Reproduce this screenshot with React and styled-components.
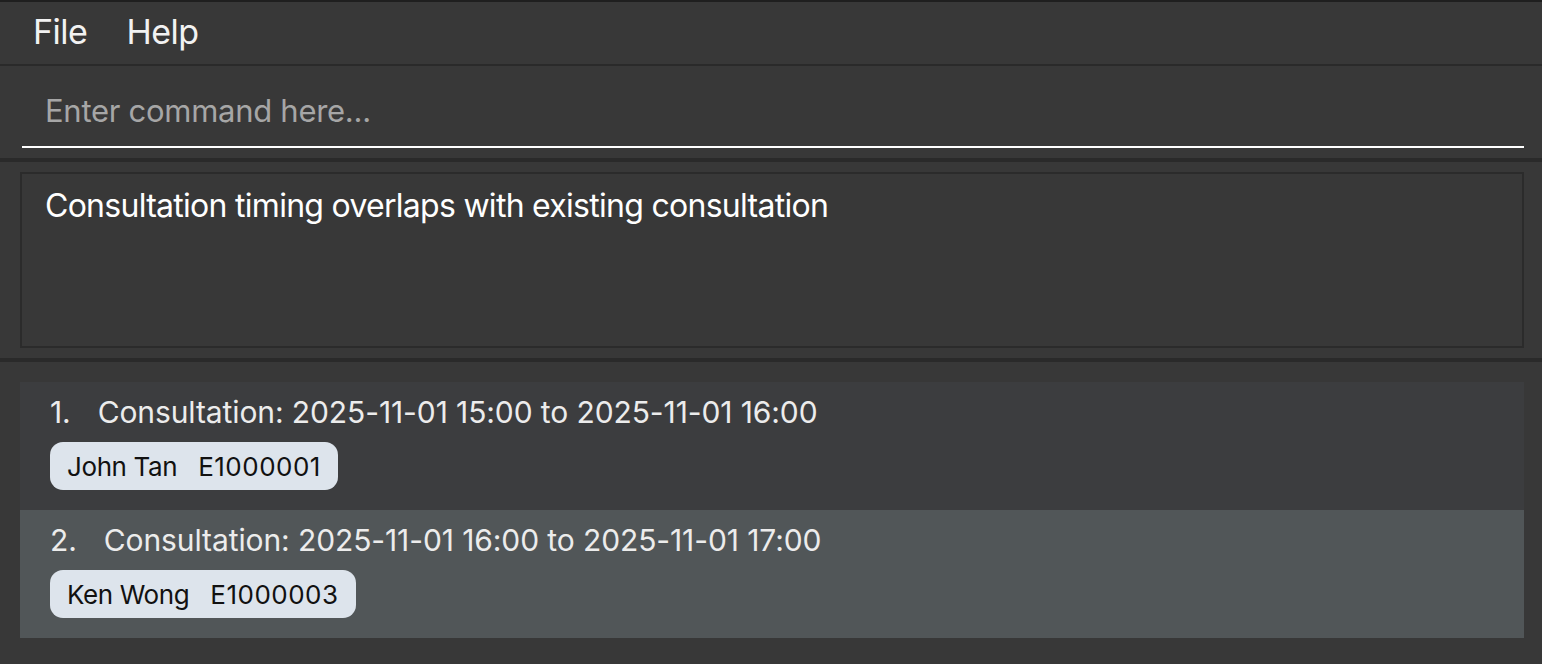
import React from "react";
import styled, { createGlobalStyle } from "styled-components";

const Global = createGlobalStyle`
  html, body { margin: 0; padding: 0; background: #383838; }
  body { font-family: Inter, "Noto Sans", "Liberation Sans", sans-serif; }
  * { box-sizing: border-box; }
`;

const Window = styled.div`
  width: 1542px;
  height: 664px;
  background: #383838;
  border-top: 2px solid #1f1f1f;
  display: flex;
  flex-direction: column;
  overflow: hidden;
`;

const MenuBar = styled.div`
  height: 64px;
  flex-shrink: 0;
  display: flex;
  align-items: center;
  gap: 39px;
  padding: 0 0 3px 33px;
  border-bottom: 2px solid #2a2a2a;
`;

const MenuItem = styled.span`
  color: #f2f2f2;
  font-size: 34px;
  letter-spacing: -0.5px;
`;

const CommandBox = styled.div`
  height: 96px;
  flex-shrink: 0;
  padding: 0 18px 0 22px;
  display: flex;
  align-items: flex-start;
  border-bottom: 4px solid #2a2a2a;
`;

const CommandInput = styled.input`
  width: 100%;
  height: 82px;
  background: transparent;
  border: none;
  border-bottom: 2px solid #ffffff;
  color: #ffffff;
  font-family: inherit;
  font-size: 31px;
  letter-spacing: -0.28px;
  padding: 8px 0 0 23px;
  outline: none;
  &::placeholder { color: #a6a6a6; }
`;

const ResultArea = styled.div`
  height: 200px;
  flex-shrink: 0;
  padding: 10px 18px 10px 20px;
  border-bottom: 4px solid #2a2a2a;
`;

const ResultBox = styled.div`
  height: 100%;
  border: 2px solid #2b2b2b;
  background: #383838;
  padding: 12px 0 0 23px;
  color: #ffffff;
  font-size: 32px;
  letter-spacing: -0.72px;
`;

const ListArea = styled.div`
  flex: 1;
  padding: 20px 18px 0 20px;
  display: flex;
  flex-direction: column;
`;

const Row = styled.div`
  height: 128px;
  flex-shrink: 0;
  background: ${(p) => (p.$alt ? "#515658" : "#3c3d3f")};
  padding: 12px 0 0 30px;
  display: flex;
  flex-direction: column;
  gap: 12px;
`;

const TitleLine = styled.div`
  display: flex;
  gap: 27px;
  color: #ececec;
  font-size: 30px;
  letter-spacing: -0.1px;
  line-height: 36px;
`;

const Chip = styled.span`
  align-self: flex-start;
  height: 48px;
  border-radius: 13px;
  background: #dde4ec;
  color: #111111;
  font-size: 26px;
  display: flex;
  align-items: center;
  gap: 21px;
  padding: 0 17px 0 17px;
`;

const ChipName = styled.span`
  letter-spacing: -0.4px;
`;

const ChipId = styled.span`
  letter-spacing: 0.5px;
`;

const consultations = [
  { id: 1, from: "2025-11-01 15:00", to: "2025-11-01 16:00", name: "John Tan", sid: "E1000001" },
  { id: 2, from: "2025-11-01 16:00", to: "2025-11-01 17:00", name: "Ken Wong", sid: "E1000003" },
];

export default function App() {
  return (
    <>
      <Global />
      <Window>
        <MenuBar>
          <MenuItem>File</MenuItem>
          <MenuItem>Help</MenuItem>
        </MenuBar>
        <CommandBox>
          <CommandInput placeholder="Enter command here..." />
        </CommandBox>
        <ResultArea>
          <ResultBox>Consultation timing overlaps with existing consultation</ResultBox>
        </ResultArea>
        <ListArea>
          {consultations.map((c, i) => (
            <Row key={c.id} $alt={i % 2 === 1}>
              <TitleLine>
                <span>{c.id}.</span>
                <span>
                  Consultation: {c.from} to {c.to}
                </span>
              </TitleLine>
              <Chip>
                <ChipName>{c.name}</ChipName>
                <ChipId>{c.sid}</ChipId>
              </Chip>
            </Row>
          ))}
        </ListArea>
      </Window>
    </>
  );
}
